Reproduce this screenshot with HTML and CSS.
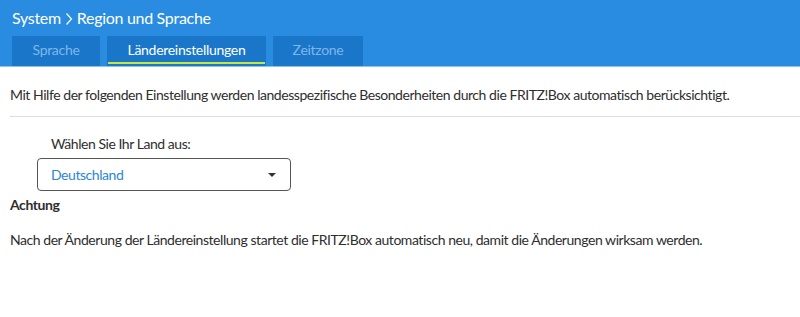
FILE: index.html
```html
<!DOCTYPE html>
<html lang="de">
<head>
<meta charset="utf-8">
<link rel="stylesheet" href="styles.css">
</head>
<body>
<header class="head">
  <div class="crumb">System <svg class="sep" width="8" height="14" viewBox="0 0 8 14"><path d="M1.5 1.5 L6.5 7 L1.5 12.5" fill="none" stroke="#fff" stroke-width="1.2"/></svg> Region und Sprache</div>
  <nav class="tabs">
    <div class="tab">Sprache</div>
    <div class="tab active">Ländereinstellungen</div>
    <div class="tab">Zeitzone</div>
  </nav>
</header>
<main class="content">
  <p class="intro">Mit Hilfe der folgenden Einstellung werden landesspezifische Besonderheiten durch die FRITZ!Box automatisch berücksichtigt.</p>
  <hr class="rule">
  <div class="field">
    <div class="label">Wählen Sie Ihr Land aus:</div>
    <div class="select">
      <span class="value">Deutschland</span>
      <span class="caret"></span>
    </div>
  </div>
  <h3 class="warn">Achtung</h3>
  <p class="note">Nach der Änderung der Ländereinstellung startet die FRITZ!Box automatisch neu, damit die Änderungen wirksam werden.</p>
</main>
</body>
</html>
```
FILE: styles.css
```css
* { box-sizing: border-box; }
html, body { margin: 0; padding: 0; background: #fff; }
body {
  font-family: Lato, "Open Sans", sans-serif;
  color: #2e2e2e;
  font-size: 14px;
  letter-spacing: -0.45px;
}
.head {
  background: #298ce0;
  height: 67px;
  padding: 6px 0 0 12px;
  border-bottom: 1px solid #8cc2f0;
  display: flex;
  flex-direction: column;
}
.crumb {
  color: #fff;
  font-size: 16px;
  height: 24px;
  line-height: 22px;
  display: flex;
  align-items: center;
  gap: 4px;
  letter-spacing: -0.3px;
}
.sep { margin-top: 1px; }
.tabs {
  display: flex;
  gap: 7px;
  margin-top: 6px;
}
.tab {
  background: #1a76c8;
  color: #7fb6ea;
  height: 30px;
  line-height: 28px;
  text-align: center;
  font-size: 14px;
  letter-spacing: -0.3px;
}
.tab:nth-child(1) { width: 88px; }
.tab:nth-child(2) { width: 159px; color: #fff; position: relative; }
.tab:nth-child(3) { width: 90px; }
.tab.active::after {
  content: "";
  position: absolute;
  left: 1px; right: 1px; bottom: 2px;
  height: 2px;
  background: #c8e63c;
}
.content { padding: 0 0 0 10px; }
.intro { margin: 18px 0 0; line-height: 20px; }
.rule {
  border: 0;
  border-top: 1px solid #ddd;
  margin: 11px 0 0;
}
.field { padding: 17px 0 0 27px; }
.label { padding-left: 14px; line-height: 20px; }
.select {
  margin-top: 4px;
  width: 254px;
  height: 33px;
  border: 1px solid #555;
  border-radius: 4px;
  display: flex;
  align-items: center;
  justify-content: space-between;
  padding: 0 14px 0 13px;
}
.value { color: #2b86d4; }
.caret {
  width: 0; height: 0;
  border-left: 4px solid transparent;
  border-right: 4px solid transparent;
  border-top: 4px solid #333;
}
.warn { margin: 5px 0 0; font-size: 14px; font-weight: 700; line-height: 18px; }
.note { margin: 16px 0 0; line-height: 20px; }
```
